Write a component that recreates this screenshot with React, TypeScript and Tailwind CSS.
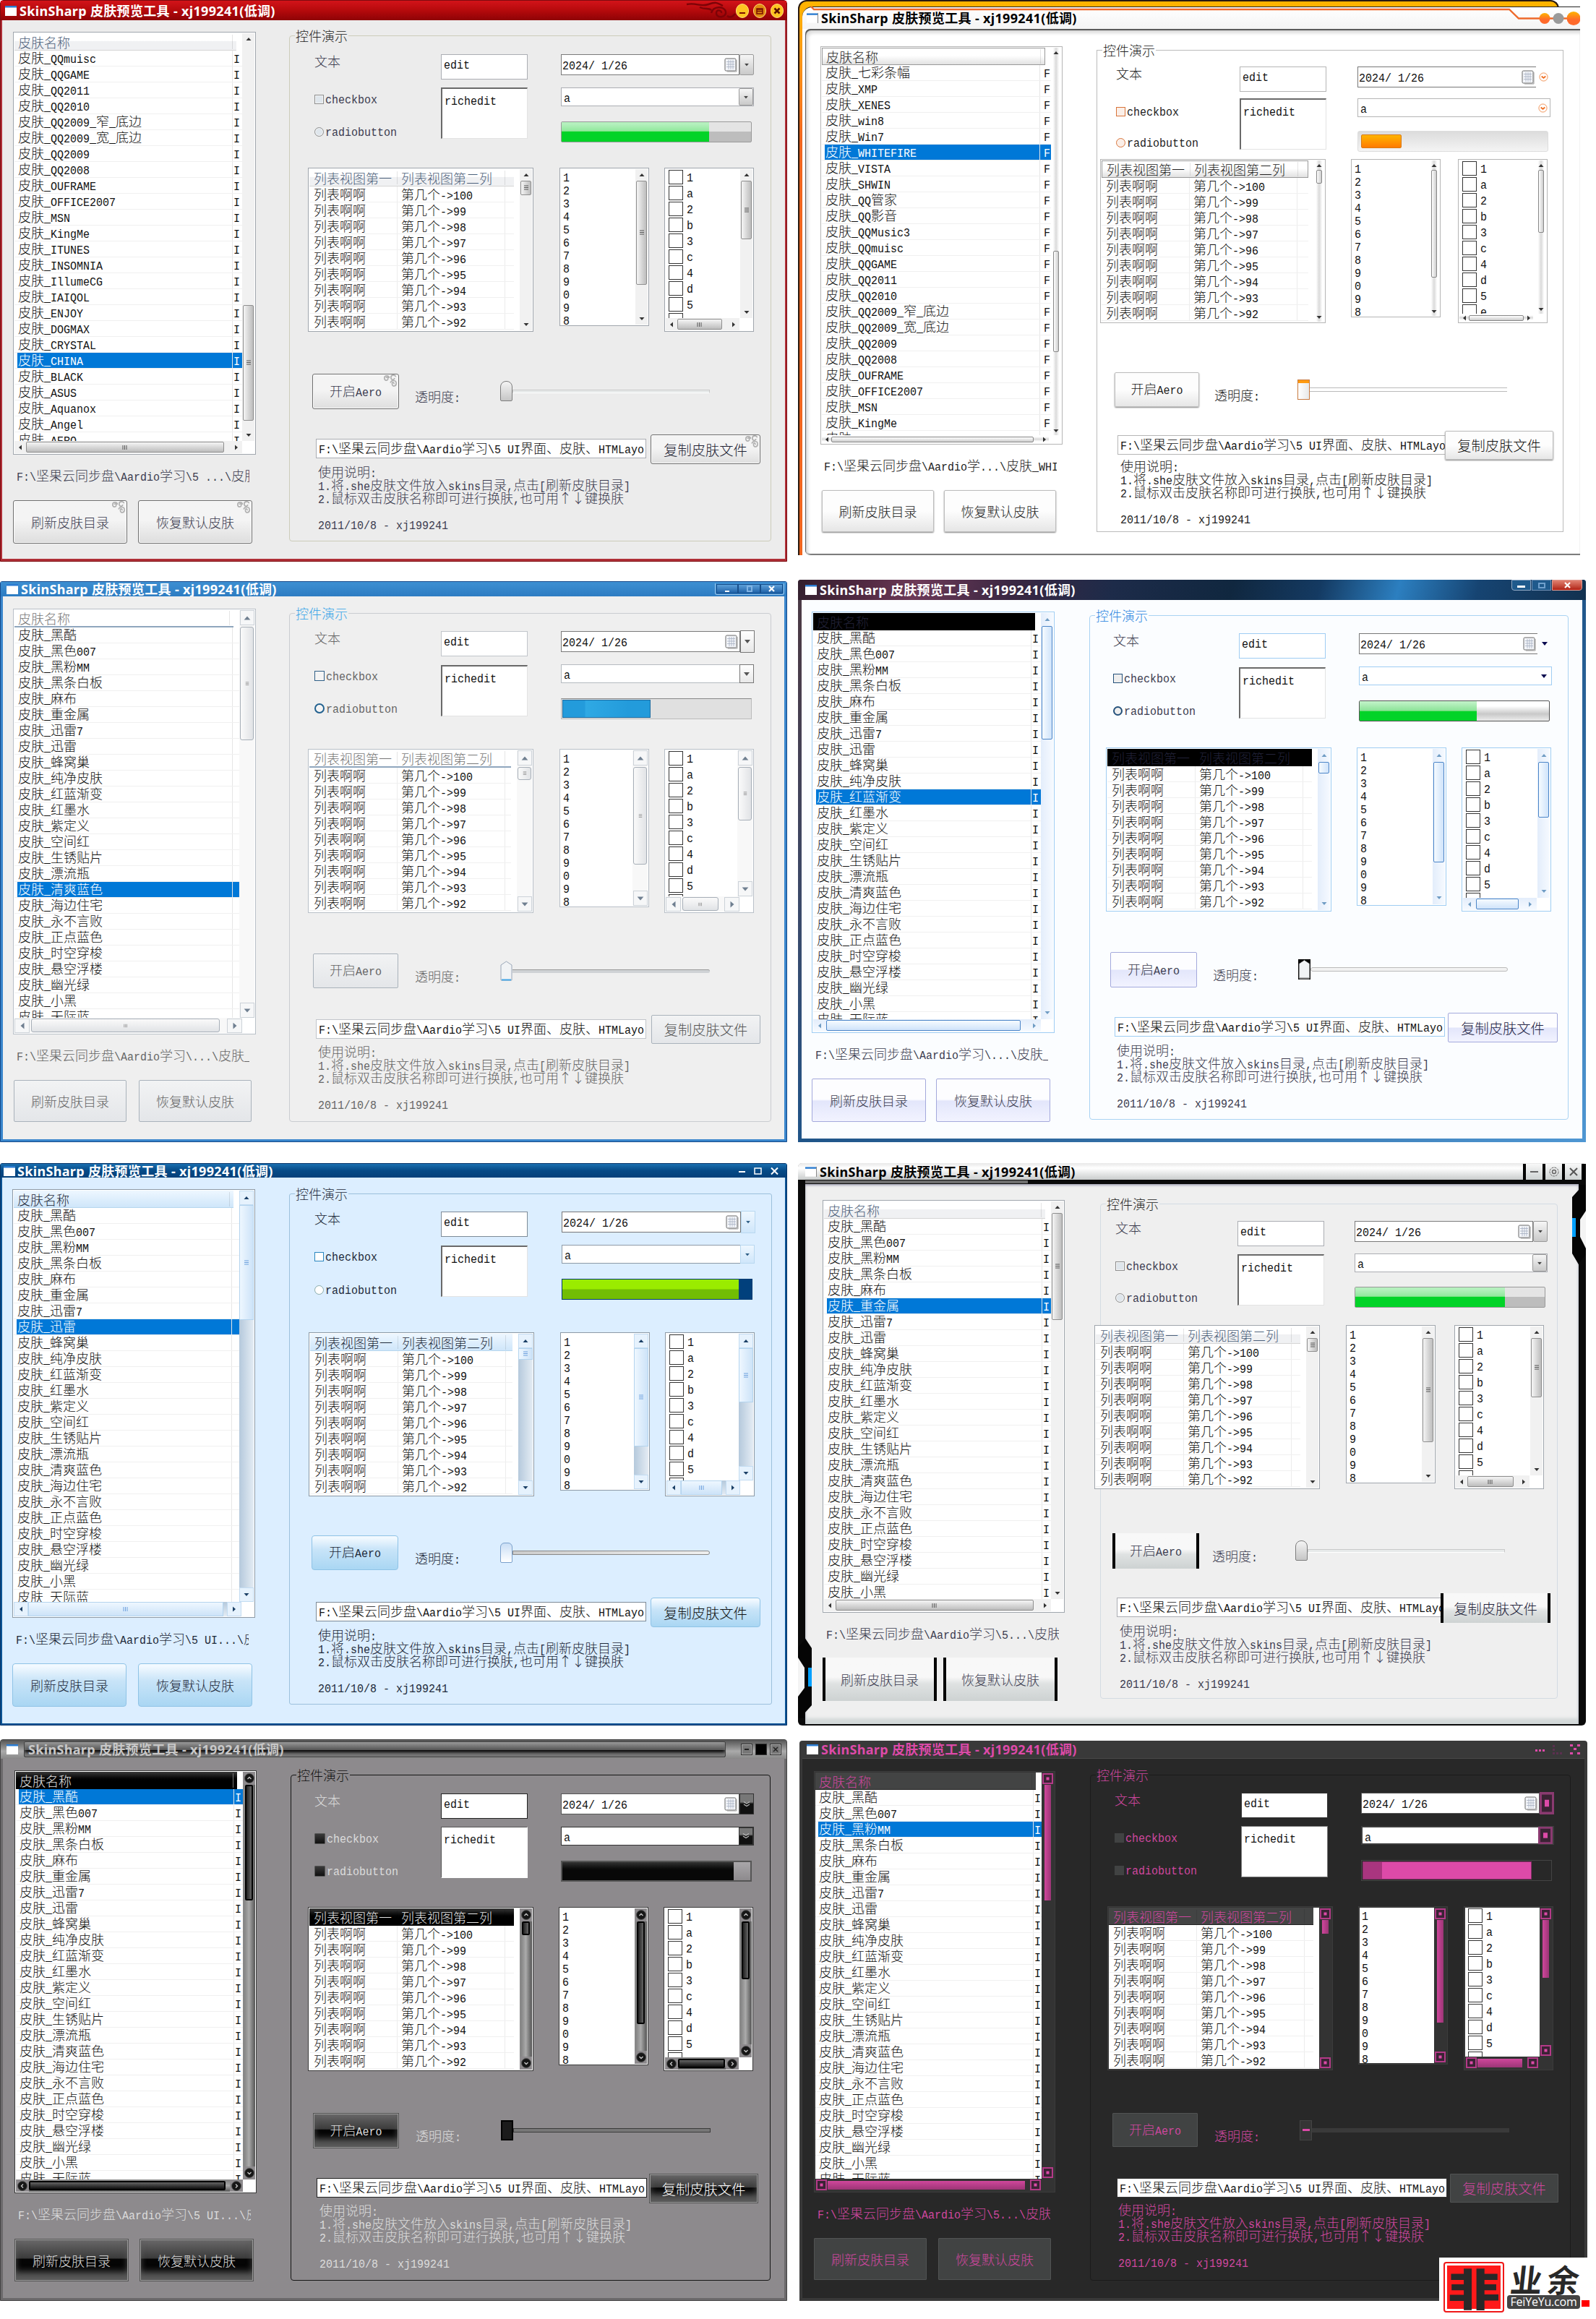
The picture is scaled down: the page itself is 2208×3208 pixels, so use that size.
import React from "react";

type Glyph = "tri" | "ball" | "square";
type Drop = "tri" | "circle" | "double" | "square";

interface Skin {
  id: string;
  text: string;
  headText: string;
  legend: string;
  copyText: string;
  names: string[];
  selected: number;
  flag: string;
  path: string;
  // left column
  leftCol: string;
  list: string;
  header: string;
  lineBox: string;
  leftBtns: string;
  leftBtn: string;
  // group box
  group: string;
  rowA: string;
  labels: string;
  radioGap: string;
  dateCol: string;
  gapA: string;
  comboGap: string;
  progressGap: string;
  rowB: string;
  listTwo: string;
  listThree: string;
  aeroRow: string;
  aeroBtn: string;
  opacityLabel: string;
  slider: string;
  pathRow: string;
  copyBtn: string;
  notes: string;
  // control looks
  btn: string;
  edit: string;
  rich: string;
  date: string;
  combo: string;
  dropBtn: string;
  drop: Drop;
  dropColor: string;
  check: string;
  radio: string;
  progress: string;
  fill: string;
  fillPct: number;
  thumb: string;
  track: string;
  // scroll bars
  sbW: string;
  sbH: string;
  sbArrowV: string;
  sbArrowH: string;
  sbTrackV: string;
  sbTrackH: string;
  sbThumbV: string;
  sbThumbH: string;
  sbGlyph: Glyph;
  sbColor: string;
  grip: string;
  main: [number, number];
  mainH: number;
  lens: [number, number, number, number];
}

const dark = [
  "黑酷", "黑色007", "黑粉MM", "黑条白板", "麻布", "重金属", "迅雷7", "迅雷", "蜂窝巢",
  "纯净皮肤", "红蓝渐变", "红墨水", "紫定义", "空间红", "生锈贴片", "漂流瓶", "清爽蓝色",
  "海边住宅", "永不言败", "正点蓝色", "时空穿梭", "悬空浮楼", "幽光绿", "小黑", "天际蓝",
];
const china = [
  "QQmuisc", "QQGAME", "QQ2011", "QQ2010", "QQ2009_窄_底边", "QQ2009_宽_底边", "QQ2009",
  "QQ2008", "OUFRAME", "OFFICE2007", "MSN", "KingMe", "ITUNES", "INSOMNIA", "IllumeCG",
  "IAIQOL", "ENJOY", "DOGMAX", "CRYSTAL", "CHINA", "BLACK", "ASUS", "Aquanox", "Angel", "AERO",
];
const white = [
  "七彩条幅", "XMP", "XENES", "win8", "Win7", "WHITEFIRE", "VISTA", "SHWIN", "QQ管家",
  "QQ影音", "QQMusic3", "QQmuisc", "QQGAME", "QQ2011", "QQ2010", "QQ2009_窄_底边",
  "QQ2009_宽_底边", "QQ2009", "QQ2008", "OUFRAME", "OFFICE2007", "MSN", "KingMe", "ITUNES",
];

/** Bitmap-style mixed text: full-width hanzi with half-width latin cells. */
function T({ children, className = "" }: { children: string; className?: string }) {
  const parts = children.split(/([\x20-\x7e]+)/).filter(Boolean);
  return (
    <span className={"whitespace-pre " + className}>
      {parts.map((p, i) =>
        /^[\x20-\x7e]+$/.test(p) ? (
          <span
            key={i}
            className="inline-block origin-[50%_70%] scale-y-[1.15] font-['Liberation_Mono',monospace] text-[15px] leading-[16px]"
          >
            {p}
          </span>
        ) : (
          <React.Fragment key={i}>{p}</React.Fragment>
        ),
      )}
    </span>
  );
}

const rot = { up: "", down: "rotate-180", left: "-rotate-90", right: "rotate-90" } as const;
type Dir = keyof typeof rot;

function Arrow({ dir, skin }: { dir: Dir; skin: Skin }) {
  if (skin.sbGlyph === "ball")
    return (
      <svg viewBox="0 0 14 14" className={"size-[14px] shrink-0 " + rot[dir]}>
        <circle cx="7" cy="7" r="6.5" fill="#161616" stroke="#555" />
        <path d="M4.5 8 7 5.5 9.5 8" fill="none" stroke="#ccc" strokeWidth="1.3" />
      </svg>
    );
  if (skin.sbGlyph === "square")
    return (
      <svg viewBox="0 0 15 15" className="size-[15px] shrink-0">
        <rect x="1" y="1" width="13" height="13" fill="#3a2334" stroke="#b43a88" strokeWidth="2" />
        <rect x="5.5" y="5.5" width="4" height="4" fill="#dd4aa8" />
      </svg>
    );
  return (
    <svg viewBox="0 0 8 8" className={"size-[8px] shrink-0 " + rot[dir] + " " + skin.sbColor}>
      <path d="M0.5 6 4 2 7.5 6Z" fill="currentColor" />
    </svg>
  );
}

function Grip({ vertical, color }: { vertical: boolean; color: string }) {
  return vertical ? (
    <svg viewBox="0 0 8 8" className={"size-[8px] " + color}>
      <path d="M1 1h6M1 3.5h6M1 6h6" stroke="currentColor" strokeWidth="1" />
    </svg>
  ) : (
    <svg viewBox="0 0 8 8" className={"size-[8px] " + color}>
      <path d="M1 1v6M3.5 1v6M6 1v6" stroke="currentColor" strokeWidth="1" />
    </svg>
  );
}

function VBar({ skin, off = 0, len }: { skin: Skin; off?: number; len: number }) {
  return (
    <div className={"flex shrink-0 flex-col items-center " + skin.sbW + " " + skin.sbTrackV}>
      <div className={"flex shrink-0 items-center justify-center " + skin.sbArrowV}>
        <Arrow dir="up" skin={skin} />
      </div>
      <div className="flex min-h-0 w-full flex-1 flex-col items-center overflow-hidden">
        <div
          className={"flex shrink-0 items-center justify-center " + skin.sbThumbV}
          style={{ marginTop: off, height: len }}
        >
          {skin.grip && <Grip vertical color={skin.grip} />}
        </div>
      </div>
      <div className={"flex shrink-0 items-center justify-center " + skin.sbArrowV}>
        <Arrow dir="down" skin={skin} />
      </div>
    </div>
  );
}

function HBar({ skin, len, pad }: { skin: Skin; len: number; pad: string }) {
  return (
    <div className={"flex shrink-0 items-stretch " + skin.sbH + " " + pad}>
      <div className={"flex flex-1 items-center " + skin.sbTrackH}>
        <div className={"flex shrink-0 items-center justify-center " + skin.sbArrowH}>
          <Arrow dir="left" skin={skin} />
        </div>
        <div className="flex h-full min-w-0 flex-1 items-center overflow-hidden">
          <div className={"flex shrink-0 items-center justify-center " + skin.sbThumbH} style={{ width: len }}>
            {skin.grip && <Grip vertical={false} color={skin.grip} />}
          </div>
        </div>
        <div className={"flex shrink-0 items-center justify-center " + skin.sbArrowH}>
          <Arrow dir="right" skin={skin} />
        </div>
      </div>
    </div>
  );
}

function DropGlyph({ skin }: { skin: Skin }) {
  if (skin.drop === "circle")
    return (
      <svg viewBox="0 0 14 14" className="size-[13px]">
        <circle cx="7" cy="7" r="6" fill="#fff" stroke="#f08a4a" />
        <path d="M4 6 7 8.5 10 6" fill="none" stroke="#f06a1a" strokeWidth="2" />
      </svg>
    );
  if (skin.drop === "double")
    return (
      <svg viewBox="0 0 10 10" className="size-[10px]">
        <path d="M1 1.5 5 4 9 1.5M1 5 5 7.5 9 5" fill="none" stroke="#bbb" strokeWidth="1.2" />
      </svg>
    );
  if (skin.drop === "square")
    return (
      <svg viewBox="0 0 20 26" preserveAspectRatio="none" className="h-full w-full">
        <rect x="1.5" y="1.5" width="17" height="23" fill="#3a2334" stroke="#8a3a70" strokeWidth="3" />
        <rect x="7" y="9" width="6" height="8" fill="#dd4aa8" />
      </svg>
    );
  return (
    <svg viewBox="0 0 8 5" className={"h-[5px] w-[8px] " + skin.dropColor}>
      <path d="M0 0h8L4 5Z" fill="currentColor" />
    </svg>
  );
}

function Calendar() {
  return (
    <svg viewBox="0 0 18 20" className="mr-[2px] h-[20px] w-[18px] shrink-0">
      <rect x="1" y="1" width="15" height="17" rx="1.5" fill="#f4f6fa" stroke="#666" />
      <path d="M3 5.5h11M3 9h11M3 12.5h11M6 3v13M9 3v13M12 3v13" stroke="#a4aec0" strokeWidth="0.8" />
      <path d="M17 3v16H4" fill="none" stroke="#999" />
    </svg>
  );
}

function Swirl() {
  return (
    <svg viewBox="0 0 24 22" className="absolute right-0 top-0 h-[18px] w-[22px]">
      <path
        d="M10 6c0-5-8-5-8 0s6 5 6 1-3-2-3-1M21 4c0-4-8-4-8 1s6 5 6 1M12 14c2-5 10-5 10 1s-7 6-7 1 4-2 3 0"
        fill="none"
        stroke="#b0b0b0"
        strokeWidth="2"
      />
    </svg>
  );
}

function Btn({ skin, className, children }: { skin: Skin; className: string; children: React.ReactNode }) {
  return (
    <button className={"relative z-10 flex shrink-0 items-center justify-center " + skin.btn + " " + className}>
      {skin.id === "china" && <Swirl />}
      {children}
    </button>
  );
}

function SkinList({ skin }: { skin: Skin }) {
  return (
    <div className={"flex flex-col border p-[1px] " + skin.lineBox + " " + skin.list}>
      <div className="flex min-h-0 flex-1">
        <div className="min-w-0 flex-1 overflow-hidden bg-white">
          <div className={"mr-[8px] flex h-[24px] items-center pl-[5px] " + skin.header + " " + skin.headText}>
            <T>皮肤名称</T>
            <i className={"ml-auto mr-[5px] h-[20px] border-l " + (skin.id === "black" ? "border-[#777]" : "border-black/10")} />
          </div>
          {skin.names.map((n, i) => (
            <div
              key={n}
              className={
                "flex h-[22px] items-center border-b border-[#f0f0f0] pl-[4px] " +
                (i === skin.selected ? "text-white" : "text-[#111]")
              }
            >
              <div className={"flex h-[21px] w-full items-center " + (i === skin.selected ? "bg-[#0078d7]" : "")}>
                <T className="w-[297px] shrink-0 pl-[1px]">{"皮肤_" + n}</T>
                <div className="flex h-[21px] items-center border-l border-[#e6e6e6] pl-[1px]">
                  {skin.flag === "F" && <T className="pl-[4px]">F</T>}
                  {skin.flag === "I" && <T>I</T>}
                </div>
              </div>
            </div>
          ))}
        </div>
        <VBar skin={skin} off={skin.main[0]} len={skin.main[1]} />
      </div>
      <HBar skin={skin} len={skin.mainH} pad="mr-[17px]" />
    </div>
  );
}

function Demo({ skin }: { skin: Skin }) {
  return (
    <fieldset className={"min-w-0 shrink-0 border " + skin.group}>
      <legend className={"ml-[7px] h-[18px] px-[1px] " + skin.legend}>
        <T>控件演示</T>
      </legend>

      <div className={"box-content flex h-[122px] " + skin.rowA}>
        <div className={"flex shrink-0 flex-col " + skin.labels}>
          <T className="block h-[53px]">文本</T>
          <label className="flex h-[18px] items-center">
            <i className={"mr-[2px] shrink-0 " + skin.check} />
            <T>checkbox</T>
          </label>
          <label className={"flex h-[18px] items-center " + skin.radioGap}>
            <i className={"mr-[2px] shrink-0 " + skin.radio} />
            <T>radiobutton</T>
          </label>
        </div>
        <div className={"flex w-[120px] shrink-0 flex-col text-[#111] " + skin.gapA}>
          <div className={"h-[35px] shrink-0 pl-[3px] pt-[2px] " + skin.edit}>
            <T>edit</T>
          </div>
          <div className={"h-[71px] shrink-0 pl-[3px] pt-[5px] " + skin.rich}>
            <T>richedit</T>
          </div>
        </div>
        <div className={"flex w-[267px] shrink-0 flex-col text-[#111] " + skin.dateCol}>
          <div className="flex h-[29px] shrink-0">
            <div className={"flex min-w-0 flex-1 items-center pl-[1px] " + skin.date}>
              <T className="flex-1">2024/ 1/26</T>
              <Calendar />
            </div>
            <div className={"flex w-[20px] shrink-0 items-center justify-center " + skin.dropBtn}>
              <DropGlyph skin={skin} />
            </div>
          </div>
          <div className={"flex h-[26px] shrink-0 " + skin.comboGap + " " + skin.combo}>
            <T className="flex-1 pl-[3px] pt-[2px]">a</T>
            <div className={"flex w-[20px] shrink-0 items-center justify-center " + skin.dropBtn}>
              <DropGlyph skin={skin} />
            </div>
          </div>
          <div className={"flex h-[29px] w-[264px] shrink-0 " + skin.progressGap + " " + skin.progress}>
            <div className={"h-full " + skin.fill} style={{ width: skin.fillPct + "%" }} />
          </div>
        </div>
      </div>

      <div className={"flex h-[227px] items-start " + skin.rowB}>
        <div className={"relative flex h-[227px] w-[312px] shrink-0 border p-[1px] " + skin.lineBox}>
          <div className="min-w-0 flex-1 overflow-hidden bg-white">
            <div className={"mr-[8px] flex h-[24px] items-center " + skin.header + " " + skin.headText}>
              <T className="w-[121px] pl-[6px]">列表视图第一</T>
              <T className="w-[149px] border-l border-black/10 pl-[5px]">列表视图第二列</T>
              <i className="h-[20px] border-l border-black/10" />
            </div>
            {[100, 99, 98, 97, 96, 95, 94, 93, 92].map((n) => (
              <div key={n} className="mr-[8px] flex h-[22px] items-center border-b border-[#f0f0f0] text-[#111]">
                <T className="h-[21px] w-[121px] pl-[6px] leading-[20px]">列表啊啊</T>
                <T className="h-[21px] w-[149px] border-l border-[#ececec] pl-[5px] leading-[20px]">{"第几个->" + n}</T>
                <i className="h-[21px] border-l border-[#ececec]" />
              </div>
            ))}
          </div>
          <VBar skin={skin} len={skin.lens[0]} />
        </div>
        <div className={"flex h-[219px] w-[124px] shrink-0 border p-[1px] " + skin.lineBox + " " + skin.listTwo}>
          <div className="flex-1 bg-white pl-[3px] text-[#111]">
            {"123456789098".split("").map((n, i) => (
              <div key={i} className="h-[18px]">
                <T>{n}</T>
              </div>
            ))}
          </div>
          <VBar skin={skin} len={skin.lens[1]} />
        </div>
        <div className={"flex h-[227px] w-[124px] shrink-0 flex-col border p-[1px] " + skin.lineBox + " " + skin.listThree}>
          <div className="flex min-h-0 flex-1">
            <div className="flex-1 overflow-hidden bg-white pl-[4px] text-[#111]">
              {["1", "a", "2", "b", "3", "c", "4", "d", "5", skin.flag === "F" ? "e" : " "].map((n) => (
                <div key={n} className="flex h-[22px] items-center">
                  <i className="mr-[5px] size-[20px] border border-[#333] bg-white" />
                  <T>{n}</T>
                </div>
              ))}
            </div>
            <VBar skin={skin} len={skin.lens[2]} />
          </div>
          <HBar skin={skin} len={skin.lens[3]} pad="mr-[18px]" />
        </div>
      </div>

      <div className={"flex items-start " + skin.aeroRow}>
        <Btn skin={skin} className={skin.aeroBtn}>
          <T>开启Aero</T>
        </Btn>
        <T className={"mt-[22px] w-[63px] shrink-0 " + skin.opacityLabel}>透明度:</T>
        <div className={"mt-[10px] flex h-[28px] items-center " + skin.slider}>
          <div className={"h-[28px] w-[17px] shrink-0 " + skin.thumb}>
            {skin.id === "blue" && <ThumbPoint stroke="#9aa7b8" foot="#42a5e6" />}
            {skin.id === "redblue" && <ThumbPoint stroke="#222" foot="#777" />}
            {skin.id === "pink" && <i className="mx-auto mt-[11px] block h-[3px] w-[10px] bg-[#dd4aa8]" />}
            {skin.id === "white" && <i className="block h-[4px] w-full bg-[#ff9a10]" />}
          </div>
          <div className={"w-[273px] " + skin.track} />
        </div>
      </div>

      <div className={"flex items-start " + skin.pathRow}>
        <div className={"mt-[6px] h-[27px] w-[457px] shrink-0 overflow-hidden bg-white pl-[3px] pt-[2px] text-[#111] " + skin.edit}>
          <T>F:\坚果云同步盘\Aardio学习\5 UI界面、皮肤、HTMLayo</T>
        </div>
        <Btn skin={skin} className={skin.copyBtn}>
          <span className={"text-[19.300px] " + skin.copyText}>复制皮肤文件</span>
        </Btn>
      </div>

      <div className={"flex flex-col " + skin.notes}>
        <T className="h-[18px]">使用说明:</T>
        <T className="h-[18px]">1.将.she皮肤文件放入skins目录,点击[刷新皮肤目录]</T>
        <T className="h-[18px]">2.鼠标双击皮肤名称即可进行换肤,也可用↑↓键换肤</T>
        <T className="mt-[18px] h-[18px]">2011/10/8 - xj199241</T>
      </div>
    </fieldset>
  );
}

function ThumbPoint({ stroke, foot }: { stroke: string; foot: string }) {
  return (
    <svg viewBox="0 0 17 28" className="h-[28px] w-[17px]">
      <path d="M1 27V6L8.5 1 16 6V27Z" fill="#f1f3f5" stroke={stroke} />
      <path d="M2 26.5h13" stroke={foot} strokeWidth="2" />
    </svg>
  );
}

function Body({ skin }: { skin: Skin }) {
  return (
    <div className={"flex min-h-0 flex-1 items-start " + skin.text}>
      <div className={"flex shrink-0 flex-col " + skin.leftCol}>
        <SkinList skin={skin} />
        <div className="mb-[23px] mt-[19px] h-[21px] w-[327px] overflow-hidden pl-[5px]">
          <T>{skin.path}</T>
        </div>
        <div className={"flex " + skin.leftBtns}>
          <Btn skin={skin} className={skin.leftBtn}>
            <T>刷新皮肤目录</T>
          </Btn>
          <Btn skin={skin} className={skin.leftBtn}>
            <T>恢复默认皮肤</T>
          </Btn>
        </div>
      </div>
      <Demo skin={skin} />
    </div>
  );
}

function AppIcon({ className = "" }: { className?: string }) {
  return (
    <svg viewBox="0 0 16 14" className={"h-[14px] w-[16px] shrink-0 " + className}>
      <rect width="16" height="14" fill="#fff" />
      <rect width="16" height="2.5" fill="#2a7bd0" />
    </svg>
  );
}

function Title({ className }: { className: string }) {
  return (
    <span className={"whitespace-pre font-['Noto_Sans','Noto_Sans_CJK_SC',sans-serif] text-[18px] font-bold leading-[20px] tracking-[0.33px] " + className}>
      SkinSharp 皮肤预览工具 - xj199241(低调)
    </span>
  );
}

/* ---- themes ---- */

const graySb = {
  sbW: "w-[17px]",
  sbH: "h-[17px]",
  sbArrowV: "h-[16px] w-full",
  sbArrowH: "h-full w-[16px]",
  sbTrackV: "bg-[#f1f1f1]",
  sbTrackH: "bg-[#f1f1f1]",
  sbThumbV: "w-[15px] rounded-[2px] border border-[#8f8f8f] bg-linear-to-r from-[#f5f5f5] to-[#bdbdbd]",
  sbThumbH: "h-[15px] rounded-[2px] border border-[#8f8f8f] bg-linear-to-b from-[#f5f5f5] to-[#bdbdbd]",
  sbGlyph: "tri" as Glyph,
  sbColor: "text-[#333]",
  grip: "text-[#555]",
};

const grayLook = {
  radioGap: "mt-[27px]",
  comboGap: "mt-[17px]",
  progressGap: "mt-[21px]",
  header: "bg-linear-to-b from-white from-45% to-[#f0f1f3] to-50% border-b border-[#d5d5d5]",
  headText: "text-[#4c607a]",
  lineBox: "border-[#a0a6ad] bg-white",
  edit: "border border-[#abadb3] bg-white",
  rich: "border-l-2 border-t-2 border-[#696969] border-b border-r border-b-[#e3e3e3] border-r-[#e3e3e3] bg-white",
  date: "border border-[#7a7a7a] bg-white",
  combo: "border border-[#abadb3] bg-white",
  dropBtn: "border border-[#9a9a9a] rounded-[2px] bg-linear-to-b from-[#f6f6f6] to-[#c9c9c9]",
  drop: "tri" as Drop,
  dropColor: "text-[#444] scale-75",
  check: "size-[13px] border border-[#8e8f8f] bg-[#dfe6ec] shadow-[inset_0_0_0_1px_#f4f4f4]",
  radio: "size-[13px] rounded-full border border-[#8e8f8f] bg-[#dfe6ec] shadow-[inset_0_0_0_1px_#f4f4f4]",
  progress: "rounded-[2px] border border-[#999] bg-linear-to-b from-[#e4e4e4] from-50% to-[#bdbdbd] to-50%",
  fill: "bg-linear-to-b from-[#b4f0bd] from-10% via-[#90e89c] via-45% to-[#02d328] to-50%",
  thumb: "rounded-t-[8px] rounded-b-[2px] border border-[#7d7d7d] bg-linear-to-b from-[#f4f4f4] to-[#c6c6c6]",
  track: "h-[5px] border border-[#c9c9c9] border-b-white bg-[#e7eaea]",
  ...graySb,
};

const skins: Skin[] = [
  {
    ...grayLook,
    id: "china",
    text: "text-[#3c3c50]",
    legend: "text-[#222]",
    copyText: "text-[#222233]",
    names: china,
    selected: 19,
    flag: "I",
    path: "F:\\坚果云同步盘\\Aardio学习\\5 ...\\皮肤",
    leftCol: "ml-[15px] mt-[16px]",
    list: "h-[585px] w-[336px]",
    leftBtns: "gap-[15px]",
    leftBtn: "h-[60px] w-[158px]",
    group: "ml-[46px] mt-[12px] h-[709px] w-[667px] rounded-[4px] border-[#ccccba]",
    rowA: "pt-[17px]",
    labels: "ml-[34px] w-[175px]",
    dateCol: "ml-[46px]",
    gapA: "gap-[11px]",
    rowB: "mt-[35px] ml-[25px]",
    listTwo: "ml-[36px]",
    listThree: "ml-[21px]",
    aeroRow: "mt-[58px] ml-[31px] h-[49px]",
    aeroBtn: "h-[49px] w-[120px]",
    opacityLabel: "ml-[22px]",
    slider: "ml-[55px]",
    pathRow: "mt-[35px] ml-[36px] h-[41px]",
    copyBtn: "ml-[6px] h-[41px] w-[152px]",
    notes: "mt-[1px] ml-[39px]",
    btn: "rounded-[3px] border border-[#707070] bg-linear-to-b from-[#f4f4f4] from-45% to-[#dedede] shadow-[inset_0_0_0_1px_#fafafa]",
    fillPct: 78,
    main: [360, 160],
    mainH: 274,
    lens: [20, 144, 81, 62],
  },
  {
    ...grayLook,
    id: "white",
    text: "text-[#222]",
    headText: "text-[#222]",
    legend: "text-[#222]",
    copyText: "text-[#111]",
    names: white,
    selected: 5,
    flag: "F",
    path: "F:\\坚果云同步盘\\Aardio学...\\皮肤_WHI",
    leftCol: "ml-[21px] mt-[24px]",
    list: "h-[551px] w-[335px]",
    header: "border border-[#999] bg-linear-to-b from-white from-45% to-[#e2e2e2]",
    lineBox: "border-[#b5b5b5] bg-white",
    leftBtns: "gap-[14px] ml-[2px]",
    leftBtn: "h-[58px] w-[155px]",
    group: "ml-[47px] mt-[20px] h-[676px] w-[646px] border-[#bbb]",
    rowA: "pt-[14px]",
    labels: "ml-[26px] w-[171px]",
    radioGap: "mt-[25px]",
    dateCol: "ml-[43px]",
    gapA: "gap-[9px]",
    comboGap: "mt-[15px]",
    progressGap: "mt-[19px]",
    rowB: "mt-[6px] ml-[4px]",
    listTwo: "ml-[35px]",
    listThree: "ml-[24px]",
    aeroRow: "mt-[68px] ml-[24px] h-[48px]",
    aeroBtn: "h-[48px] w-[117px]",
    opacityLabel: "ml-[21px]",
    slider: "ml-[52px]",
    pathRow: "mt-[33px] ml-[28px] h-[40px]",
    copyBtn: "-ml-[4px] h-[40px] w-[150px]",
    notes: "-mt-[1px] ml-[32px]",
    btn: "rounded-[2px] border border-[#bdbdbd] bg-linear-to-b from-[#fdfdfd] from-50% to-[#e6e6e6] shadow-[0_1px_2px_#888]",
    edit: "border border-[#b5b5b5] bg-white",
    date: "border-y border-l border-[#777] bg-white",
    combo: "border border-[#b5b5b5] bg-white",
    dropBtn: "",
    drop: "circle",
    check: "size-[13px] border border-[#d9743a] bg-[#fbefe8]",
    radio: "size-[13px] rounded-full border border-[#d9743a] bg-[#fbefe8]",
    progress: "rounded-[3px] border border-[#ddd] bg-linear-to-b from-[#dcdcdc] to-[#f4f4f4] p-[4px]",
    fill: "rounded-[2px] border border-[#d97a10] bg-linear-to-b from-[#ffb400] to-[#ff7a00]",
    fillPct: 22,
    thumb: "border border-[#c87a40] bg-linear-to-r from-white to-[#e8e8e8]",
    track: "h-[6px] border-y border-[#bbb]",
    sbW: "w-[14px]",
    sbH: "h-[11px]",
    sbArrowV: "h-[13px] w-full",
    sbArrowH: "h-full w-[13px]",
    sbTrackV: "bg-linear-to-r from-white from-20% via-[#dadada] to-white to-80%",
    sbTrackH: "bg-linear-to-b from-white from-20% via-[#dadada] to-white to-80%",
    sbThumbV: "w-[8px] rounded-[2px] border border-[#888] bg-linear-to-r from-white to-[#ccc]",
    sbThumbH: "h-[8px] rounded-[2px] border border-[#888] bg-linear-to-b from-white to-[#ccc]",
    grip: "",
    main: [268, 140],
    mainH: 280,
    lens: [19, 149, 87, 76],
  },
  {
    ...grayLook,
    id: "blue",
    text: "text-[#666]",
    headText: "text-[#777]",
    legend: "text-[#35a4e8]",
    copyText: "text-[#555]",
    names: dark,
    selected: 16,
    flag: "",
    path: "F:\\坚果云同步盘\\Aardio学习\\...\\皮肤_",
    leftCol: "ml-[14px] mt-[17px]",
    list: "h-[589px] w-[336px]",
    header: "border-b-2 border-[#8fa6bd] bg-white",
    lineBox: "border-[#b9c0c8] bg-white",
    leftBtns: "gap-[17px] ml-[1px]",
    leftBtn: "h-[58px] w-[156px]",
    group: "ml-[46px] mt-[14px] h-[713px] w-[667px] rounded-[4px] border-[#c9ccd0]",
    rowA: "pt-[16px]",
    labels: "ml-[34px] w-[175px]",
    dateCol: "ml-[46px]",
    gapA: "gap-[12px]",
    rowB: "mt-[41px] ml-[25px]",
    listTwo: "ml-[36px]",
    listThree: "ml-[21px]",
    aeroRow: "mt-[56px] ml-[32px] h-[48px]",
    aeroBtn: "h-[48px] w-[118px]",
    opacityLabel: "ml-[23px]",
    slider: "ml-[55px]",
    pathRow: "mt-[37px] ml-[36px] h-[40px]",
    copyBtn: "ml-[7px] h-[40px] w-[151px]",
    notes: "mt-[1px] ml-[39px]",
    btn: "rounded-[2px] border border-[#a9b2bb] bg-linear-to-b from-[#f2f3f4] to-[#e4e6e9]",
    edit: "border border-[#c1c5ca] bg-white",
    date: "border border-[#7a7a7a] bg-white",
    combo: "border border-[#b5bac0] bg-white",
    dropBtn: "border border-[#777] bg-linear-to-b from-white to-[#e8e8e8] -my-px -mr-px",
    dropColor: "text-[#555]",
    check: "size-[14px] border border-[#2f5f86] bg-[#f4f4f4]",
    radio: "size-[14px] rounded-full border-2 border-[#22618f] bg-[#f4f4f4]",
    progress: "border border-[#bbb] border-t-[#888] bg-[#e0e0e0] p-[1px]",
    fill: "border border-[#1c6da3] bg-linear-to-r from-[#239bdb] from-25% via-[#2fa9e4] via-26% to-[#239bdb] to-75%",
    fillPct: 47,
    thumb: "",
    track: "h-[5px] rounded-r border-t border-[#999] bg-[#cfd2d5]",
    sbW: "w-[21px]",
    sbH: "h-[21px]",
    sbArrowV: "h-[21px] w-[20px] border border-[#ccd2d8] bg-[#f6f7f8] mb-[2px] last:mb-0",
    sbArrowH: "h-[20px] w-[21px] border border-[#ccd2d8] bg-[#f6f7f8] mr-[2px] last:mr-0",
    sbTrackV: "bg-[#f8f8f8]",
    sbTrackH: "bg-[#f8f8f8]",
    sbThumbV: "w-[19px] rounded-[3px] border border-[#a7afb8] bg-linear-to-r from-[#fafafa] to-[#e1e3e6]",
    sbThumbH: "h-[19px] rounded-[3px] border border-[#a7afb8] bg-linear-to-b from-[#fafafa] to-[#e1e3e6]",
    sbColor: "text-[#6f7f90] scale-125",
    grip: "text-[#888] scale-75",
    main: [0, 157],
    mainH: 261,
    lens: [18, 135, 74, 50],
  },
  {
    ...grayLook,
    id: "redblue",
    text: "text-[#3c3c50]",
    headText: "text-[#23233a]",
    legend: "text-[#2a86e0]",
    copyText: "text-[#222244]",
    names: dark,
    selected: 10,
    flag: "I",
    path: "F:\\坚果云同步盘\\Aardio学习\\...\\皮肤_",
    leftCol: "ml-[14px] mt-[16px]",
    list: "h-[583px] w-[336px]",
    header: "bg-black",
    lineBox: "border-[#9fcdf3] bg-white",
    leftBtns: "gap-[14px]",
    leftBtn: "h-[60px] w-[158px]",
    group: "ml-[48px] mt-[12px] h-[707px] w-[663px] rounded-[4px] border-[#a9d3f3]",
    rowA: "pt-[16px]",
    labels: "ml-[32px] w-[174px]",
    dateCol: "ml-[46px]",
    gapA: "gap-[12px]",
    rowB: "mt-[36px] ml-[22px]",
    listTwo: "ml-[35px]",
    listThree: "ml-[21px]",
    aeroRow: "mt-[56px] ml-[28px] h-[49px]",
    aeroBtn: "h-[49px] w-[120px]",
    opacityLabel: "ml-[22px]",
    slider: "ml-[55px]",
    pathRow: "mt-[35px] ml-[34px] h-[41px]",
    copyBtn: "ml-[4px] h-[41px] w-[152px]",
    notes: "mt-[1px] ml-[37px]",
    btn: "rounded-[2px] border border-[#a4a9dc] bg-linear-to-b from-[#fdfdff] from-48% via-[#e3e6fb] via-52% to-[#f2f3ff]",
    edit: "border border-[#9fcdf3] bg-white",
    date: "border-y border-l border-[#777] bg-white",
    combo: "border border-[#9fcdf3] bg-white",
    dropBtn: "",
    dropColor: "text-[#0b0b50]",
    check: "size-[13px] border border-[#23507a] bg-[#eee]",
    radio: "size-[13px] rounded-full border-2 border-[#23507a] bg-[#eee]",
    progress: "rounded-[2px] border border-[#555] bg-linear-to-b from-white from-25% via-[#c9c9c9] via-65% to-[#ececec]",
    fill: "bg-linear-to-b from-[#c4f4cb] via-[#8be398] via-48% to-[#02d328] to-52%",
    fillPct: 62,
    thumb: "bg-black",
    track: "h-[6px] rounded border border-[#bbb] bg-[#f2f2f2]",
    sbW: "w-[17px]",
    sbH: "h-[17px]",
    sbArrowV: "h-[18px] w-full",
    sbArrowH: "h-full w-[18px]",
    sbTrackV: "bg-linear-to-r from-[#e3edfb] to-[#f6faff]",
    sbTrackH: "bg-linear-to-b from-[#e3edfb] to-[#f6faff]",
    sbThumbV: "w-[15px] rounded-[2px] border border-[#4d86c8] bg-linear-to-r from-[#f6fbff] to-[#cfe3fa]",
    sbThumbH: "h-[15px] rounded-[2px] border border-[#4d86c8] bg-linear-to-b from-[#f6fbff] to-[#cfe3fa]",
    sbColor: "text-[#6f9cc4]",
    grip: "",
    main: [0, 157],
    mainH: 269,
    lens: [16, 139, 77, 59],
  },
  {
    ...grayLook,
    id: "thunder",
    text: "text-[#1e2a3a]",
    headText: "text-[#1e2a3a]",
    legend: "text-[#1e2a3a]",
    copyText: "text-[#111]",
    names: dark,
    selected: 7,
    flag: "",
    path: "F:\\坚果云同步盘\\Aardio学习\\5 UI...\\皮",
    leftCol: "ml-[14px] mt-[16px]",
    list: "h-[593px] w-[336px]",
    header: "border-b border-[#b6d6ee] bg-linear-to-b from-[#eef7ff] to-[#cfe6fa]",
    lineBox: "border-[#8d9aa6] bg-white",
    leftBtns: "gap-[16px]",
    leftBtn: "h-[60px] w-[158px]",
    group: "ml-[47px] mt-[13px] h-[716px] w-[668px] rounded-[3px] border-[#9cc0dc]",
    rowA: "pt-[16px]",
    labels: "ml-[34px] w-[175px]",
    radioGap: "mt-[28px]",
    dateCol: "ml-[47px]",
    gapA: "gap-[12px]",
    rowB: "mt-[45px] ml-[26px]",
    listTwo: "ml-[36px]",
    listThree: "ml-[21px]",
    aeroRow: "mt-[54px] ml-[30px] h-[48px]",
    aeroBtn: "h-[48px] w-[120px]",
    opacityLabel: "ml-[23px]",
    slider: "ml-[55px]",
    pathRow: "mt-[38px] ml-[36px] h-[41px]",
    copyBtn: "ml-[6px] h-[41px] w-[152px]",
    notes: "mt-[1px] ml-[39px]",
    btn: "rounded-[4px] border border-[#8fc3e6] bg-linear-to-b from-[#f2f9ff] from-5% via-[#c8e4f8] via-40% to-[#a9d6f3]",
    edit: "border border-[#7d8b97] bg-white",
    date: "border border-[#777] bg-white",
    combo: "border border-[#8d9aa6] bg-white",
    dropBtn: "border border-[#b9d8f0] bg-linear-to-b from-[#eef7ff] to-[#cfe6fa] -my-px -mr-px",
    dropColor: "text-[#2f5f86] scale-75",
    check: "size-[13px] border border-[#2a86c0] bg-white",
    radio: "size-[13px] rounded-full border border-[#8aa] bg-white",
    progress: "border border-[#003a70] bg-[#01407c]",
    fill: "bg-linear-to-b from-[#9aec00] from-48% to-[#72bd04] to-52%",
    fillPct: 93,
    thumb: "rounded-t-[6px] rounded-b-[2px] border border-[#7aa0cc] bg-linear-to-b from-[#c9def5] to-white",
    track: "h-[6px] rounded-r-full border border-[#888] bg-linear-to-r from-[#ccc] to-[#eee]",
    sbW: "w-[20px]",
    sbH: "h-[20px]",
    sbArrowV: "h-[20px] w-full border border-[#c3dcf2] bg-[#e6f2fd]",
    sbArrowH: "h-full w-[20px] border border-[#c3dcf2] bg-[#e6f2fd]",
    sbTrackV: "bg-linear-to-r from-[#b5c9dc] to-[#e4ecf4]",
    sbTrackH: "bg-linear-to-b from-[#b5c9dc] to-[#e4ecf4]",
    sbThumbV: "w-full border border-[#b4d4ee] bg-linear-to-r from-[#eef7ff] to-[#cde3f8]",
    sbThumbH: "h-full border border-[#b4d4ee] bg-linear-to-b from-[#eef7ff] to-[#cde3f8]",
    sbColor: "text-[#1b3f66]",
    grip: "text-[#6da0dd]",
    main: [0, 159],
    mainH: 270,
    lens: [16, 136, 75, 57],
  },
  {
    ...grayLook,
    id: "metal",
    text: "text-[#3c3c50]",
    legend: "text-[#222]",
    copyText: "text-[#22223a]",
    names: dark.slice(0, 24),
    selected: 5,
    flag: "I",
    path: "F:\\坚果云同步盘\\Aardio学习\\5...\\皮肤",
    leftCol: "ml-[24px] mt-[22px]",
    list: "h-[571px] w-[335px]",
    leftBtns: "-mt-[1px] gap-[9px]",
    leftBtn: "h-[60px] w-[158px]",
    group: "ml-[49px] mt-[18px] h-[694px] w-[633px] rounded-[4px] border-[#d3dbe3]",
    rowA: "pt-[15px]",
    labels: "ml-[20px] w-[169px]",
    radioGap: "mt-[26px]",
    dateCol: "ml-[42px]",
    gapA: "gap-[11px]",
    comboGap: "mt-[16px]",
    progressGap: "mt-[20px]",
    rowB: "mt-[22px] -ml-[9px]",
    listTwo: "ml-[36px]",
    listThree: "ml-[26px]",
    aeroRow: "mt-[61px] ml-[16px] h-[49px]",
    aeroBtn: "h-[49px] w-[120px]",
    opacityLabel: "ml-[18px]",
    slider: "ml-[52px]",
    pathRow: "mt-[34px] ml-[22px] h-[41px]",
    copyBtn: "-ml-[9px] h-[41px] w-[152px]",
    notes: "mt-[1px] ml-[26px]",
    btn: "border-x-[4px] border-black bg-linear-to-b from-[#f8f8f8] from-45% via-[#dfe2e2] via-60% to-[#cdd2d2]",
    fillPct: 79,
    main: [0, 148],
    mainH: 274,
    lens: [19, 144, 82, 64],
  },
  {
    ...grayLook,
    id: "black",
    text: "text-[#dcdcdc]",
    headText: "text-[#e4e4e4]",
    legend: "text-[#111]",
    copyText: "text-white",
    names: dark,
    selected: 0,
    flag: "I",
    path: "F:\\坚果云同步盘\\Aardio学习\\5 UI...\\皮",
    leftCol: "ml-[16px] mt-[16px]",
    list: "h-[585px] w-[335px]",
    header: "bg-linear-to-b from-[#3a3a3a] to-black to-60%",
    lineBox: "border-[#3a3a3a] bg-white",
    leftBtns: "gap-[15px]",
    leftBtn: "h-[59px] w-[158px]",
    group: "ml-[47px] mt-[13px] h-[709px] w-[664px] rounded-[4px] border-[#161616]",
    rowA: "pt-[17px]",
    labels: "ml-[32px] w-[175px]",
    dateCol: "ml-[46px]",
    gapA: "gap-[11px]",
    rowB: "mt-[35px] ml-[23px]",
    listTwo: "ml-[35px]",
    listThree: "ml-[21px]",
    aeroRow: "mt-[58px] ml-[30px] h-[49px]",
    aeroBtn: "h-[49px] w-[119px]",
    opacityLabel: "ml-[23px]",
    slider: "ml-[55px]",
    pathRow: "mt-[35px] ml-[35px] h-[41px]",
    copyBtn: "ml-[3px] h-[41px] w-[151px]",
    notes: "mt-0 ml-[39px]",
    btn: "border border-[#555] bg-linear-to-b from-[#6a696a] from-0% via-[#3c3c3c] via-45% to-[#050505] to-48% shadow-[inset_0_0_0_1px_#999,inset_0_-12px_10px_#5a5a5a]",
    edit: "border border-[#222] bg-white",
    rich: "border border-[#555] border-b-white border-r-white bg-white",
    date: "border border-[#555] bg-white",
    combo: "border border-[#333] bg-white",
    dropBtn: "border border-[#333] bg-linear-to-b from-[#777] from-40% to-[#111] to-50%",
    drop: "double",
    check: "size-[15px] rounded-[1px] border border-[#555] bg-linear-to-b from-[#3a3a3a] to-[#111]",
    radio: "size-[15px] rounded-[1px] border border-[#555] bg-linear-to-b from-[#3a3a3a] to-[#111]",
    progress: "border-2 border-[#555] bg-linear-to-b from-[#a9a7aa] to-[#8d8a8d]",
    fill: "bg-linear-to-b from-[#333] to-[#080808] to-40%",
    fillPct: 91,
    thumb: "border-2 border-black bg-[#1b1b1b]",
    track: "h-[6px] border border-[#3b3b3b] bg-[#777]",
    sbW: "w-[17px]",
    sbH: "h-[17px] bg-[#8d8a8d]",
    sbArrowV: "h-[18px] w-full bg-[#8d8a8d]",
    sbArrowH: "h-full w-[18px] bg-[#8d8a8d]",
    sbTrackV: "bg-linear-to-r from-[#888] from-15% via-[#aaa] via-50% to-[#555]",
    sbTrackH: "bg-linear-to-b from-[#888] from-15% via-[#aaa] via-50% to-[#555]",
    sbThumbV: "w-[11px] rounded-[2px] border-2 border-black bg-linear-to-r from-[#222] to-[#666]",
    sbThumbH: "h-[13px] rounded-[2px] border-2 border-black bg-linear-to-b from-[#666] to-[#111]",
    sbGlyph: "ball",
    grip: "",
    main: [0, 160],
    mainH: 272,
    lens: [19, 142, 80, 65],
  },
  {
    ...grayLook,
    id: "pink",
    text: "text-[#cf479f]",
    headText: "text-[#cf479f]",
    legend: "text-[#cf479f]",
    copyText: "text-[#cf479f]",
    names: dark,
    selected: 2,
    flag: "I",
    path: "F:\\坚果云同步盘\\Aardio学习\\5...\\皮肤",
    leftCol: "ml-[16px] mt-[17px]",
    list: "h-[583px] w-[334px]",
    header: "border-b border-[#222] bg-[#434444]",
    lineBox: "border-[#3c3c3c] bg-[#333]",
    leftBtns: "gap-[16px]",
    leftBtn: "h-[58px] w-[156px]",
    group: "ml-[48px] mt-[13px] h-[709px] w-[665px] rounded-[4px] border-[#1b1b1b]",
    rowA: "pt-[16px]",
    labels: "ml-[33px] w-[175px]",
    dateCol: "ml-[46px]",
    gapA: "gap-[11px]",
    rowB: "mt-[35px] ml-[23px]",
    listTwo: "ml-[35px]",
    listThree: "ml-[22px]",
    aeroRow: "mt-[59px] ml-[30px] h-[47px]",
    aeroBtn: "h-[47px] w-[118px]",
    opacityLabel: "ml-[23px]",
    slider: "ml-[55px]",
    pathRow: "mt-[37px] ml-[36px] h-[40px]",
    copyBtn: "ml-[4px] h-[40px] w-[150px]",
    notes: "mt-0 ml-[38px]",
    btn: "rounded-[1px] border border-[#515353] bg-[#414343]",
    edit: "border border-[#333] bg-white",
    rich: "border border-[#777] bg-white",
    date: "border border-[#555] bg-white",
    combo: "border-[2px] border-[#3c3c3c] bg-white",
    dropBtn: "bg-[#333] -my-px",
    drop: "square",
    check: "size-[13px] bg-[#414343]",
    radio: "size-[13px] bg-[#414343]",
    progress: "border border-[#444] p-[1px]",
    fill: "border border-[#8a2f6a] bg-linear-to-r from-[#a9357f] from-11% to-[#dd4aa8] to-11%",
    fillPct: 90,
    thumb: "border border-[#444] bg-[#353535]",
    track: "h-[6px] bg-[#3a3a3a]",
    sbW: "w-[17px]",
    sbH: "h-[17px]",
    sbArrowV: "h-[17px] w-full",
    sbArrowH: "h-full w-[17px]",
    sbTrackV: "bg-[#333]",
    sbTrackH: "bg-[#333]",
    sbThumbV: "w-[9px] bg-linear-to-r from-[#d0479c] to-[#9c3576]",
    sbThumbH: "h-[12px] bg-linear-to-b from-[#d0479c] to-[#9c3576]",
    sbGlyph: "square",
    grip: "",
    main: [0, 160],
    mainH: 273,
    lens: [19, 142, 80, 62],
  },
];

/* ---- window frames ---- */

function Orb({ kind }: { kind: "min" | "max" | "close" }) {
  return (
    <svg viewBox="0 0 18 20" className="h-[20px] w-[18px]">
      <ellipse cx="9" cy="10" rx="8.6" ry="9.4" fill={kind === "max" ? "#e08a10" : "#ffc420"} stroke="#ffe27a" />
      {kind === "min" && <path d="M5 13h8" stroke="#7a0f00" strokeWidth="2" />}
      {kind === "max" && <path d="M5 7h8v7H5ZM5 8h8M5 10.5h8" fill="none" stroke="#7a0f00" strokeWidth="1.5" />}
      {kind === "close" && <path d="M5.5 6.5l7 7M12.5 6.5l-7 7" stroke="#5a0f00" strokeWidth="2.6" />}
    </svg>
  );
}

function ChinaWindow() {
  return (
    <div className="flex h-[777px] w-[1089px] flex-col rounded-t-[5px] border border-[#7e0b0f] bg-[#b03038]">
      <div className="flex h-[27px] items-center bg-linear-to-b from-[#d31319] via-[#b50a0c] to-[#8e0306] pl-[6px]">
        <AppIcon />
        <Title className="ml-[4px] text-white" />
        <svg viewBox="0 0 70 26" className="ml-auto h-[26px] w-[70px]">
          <path
            d="M2 4c14-3 18 4 30 0s12-2 20 2M36 16c2-10 18-10 20-2s-12 10-13 3 8-5 7-1M20 8c8 4 12 0 16 4M58 20c4 3 8 1 11-3"
            fill="none"
            stroke="#7d0307"
            strokeWidth="2.4"
          />
        </svg>
        <div className="mr-[4px] flex gap-[6px]">
          <Orb kind="min" />
          <Orb kind="max" />
          <Orb kind="close" />
        </div>
      </div>
      <div className="mx-[2px] mb-[3px] flex flex-1 bg-[#ececec]">
        <Body skin={skins[0]} />
      </div>
    </div>
  );
}

function WhiteWindow() {
  return (
    <div className="relative ml-[4px] h-[768px] w-[1082px]">
      <div className="absolute left-0 top-0 h-[768px] w-[1053px] rounded-t-[12px] border-2 border-b-0 border-[#2a1a10] bg-linear-to-b from-[#ffb400] to-[#f0651e] to-25%" />
      <div className="relative ml-[6px] flex h-[768px] flex-col pt-[9px]">
        <div className="flex h-[31px] items-center rounded-tl-[14px] border-t border-[#222] bg-linear-to-b from-white to-[#f4f4f4] pl-[6px]">
          <AppIcon className="border-r border-[#888]" />
          <Title className="ml-[4px] text-black" />
        </div>
        <div className="flex flex-1 bg-white pl-[4px]">
          <div className="flex flex-1 rounded-[7px] rounded-r-none bg-white shadow-[inset_1px_2px_1px_#555,inset_4px_6px_4px_#ddd,inset_0_-2px_1px_#777]">
            <Body skin={skins[1]} />
          </div>
        </div>
      </div>
      <svg viewBox="0 0 1082 40" className="absolute left-0 top-0 h-[40px] w-[1082px]">
        <path d="M18 9 22 13H984L997 25.500H1080" fill="none" stroke="#ee6a2b" strokeWidth="2.4" />
        <circle cx="1033" cy="25.500" r="7.500" fill="url(#orangeDot)" />
        <circle cx="1052" cy="25.500" r="7.500" fill="#9a9a9a" />
        <circle cx="1073" cy="25.500" r="9.500" fill="url(#orangeDot)" />
        <defs>
          <linearGradient id="orangeDot" x1="0" y1="0" x2="0" y2="1">
            <stop offset="0" stopColor="#ffb400" />
            <stop offset="0.6" stopColor="#ff6a2b" />
          </linearGradient>
        </defs>
      </svg>
    </div>
  );
}

function BlueWindow() {
  const cell = "flex h-[13px] items-center justify-center border border-[#174f8c] bg-linear-to-b from-[#5c9fd8] to-[#1f62a8]";
  return (
    <div className="mt-[4px] flex h-[776px] w-[1089px] flex-col rounded-t-[3px] border border-[#15498a] bg-[#3a86cc]">
      <div className="flex h-[20px] items-center bg-linear-to-b from-[#3d8fd2] to-[#2d7cc2] pl-[8px]">
        <AppIcon />
        <Title className="ml-[4px] text-white" />
        <div className="ml-auto mr-[3px] flex rounded-b-[3px] border border-t-0 border-[#9cc6ea] p-px">
          <div className={"w-[30px] " + cell}><i className="mt-[6px] h-[2px] w-[6px] bg-white" /></div>
          <div className={"w-[31px] " + cell}><i className="h-[9px] w-[8px] border-2 border-[#7fb2e2]" /></div>
          <div className={"w-[31px] " + cell}>
            <svg viewBox="0 0 9 9" className="size-[9px]"><path d="M1 1l7 7M8 1 1 8" stroke="#fff" strokeWidth="2.2" /></svg>
          </div>
        </div>
      </div>
      <div className="mx-[3px] mb-[3px] flex flex-1 bg-[#efefef]">
        <Body skin={skins[2]} />
      </div>
    </div>
  );
}

function RedBlueWindow() {
  return (
    <div className="ml-[4px] mt-[2px] flex h-[778px] w-[1090px] flex-col rounded-t-[4px] bg-linear-to-br from-[#4a3a46] from-5% via-[#1f5488] via-50% to-[#4f97d3]">
      <div className="flex h-[28px] items-center rounded-t-[4px] bg-[linear-gradient(105deg,#33202e_0%,#532a43_9%,#6d3a58_15%,#3b2742_27%,#1d2b49_40%,#10273f_55%,#143a62_66%,#2c7fc0_76%,#164472_86%,#12314f_100%)] pl-[10px]">
        <AppIcon />
        <Title className="ml-[4px] text-white" />
        <div className="mb-auto ml-auto mr-[5px] flex h-[15px] gap-px rounded-b-[4px] text-white">
          <div className="flex w-[27px] items-center justify-center rounded-bl-[4px] border border-[#8fa8c4] bg-[#1f5a8c]"><i className="mt-[4px] h-[3px] w-[11px] bg-white" /></div>
          <div className="flex w-[27px] items-center justify-center border border-[#6f8fb4] bg-[#1f5a8c]"><i className="h-[8px] w-[10px] border-2 border-[#6f9fcc]" /></div>
          <div className="flex w-[42px] items-center justify-center rounded-br-[4px] border border-[#e09a90] bg-linear-to-b from-[#e08070] to-[#b01c10]">
            <svg viewBox="0 0 9 9" className="size-[9px]"><path d="M1 1l7 7M8 1 1 8" stroke="#fff" strokeWidth="2.2" /></svg>
          </div>
        </div>
      </div>
      <div className="mx-[5px] mb-[5px] flex flex-1 bg-[#fbfdff]">
        <Body skin={skins[3]} />
      </div>
    </div>
  );
}

function ThunderWindow() {
  return (
    <div className="mt-[9px] flex h-[778px] w-[1089px] flex-col rounded-t-[3px] border border-[#06356a] bg-[#0b5394]">
      <div className="flex h-[19px] items-center bg-linear-to-b from-[#1a6fb0] via-[#064a86] via-50% to-[#04407a] pl-[4px]">
        <AppIcon />
        <Title className="ml-[3px] text-white" />
        <svg viewBox="0 0 56 12" className="ml-auto mr-[10px] h-[12px] w-[56px]">
          <path d="M0 7h9" stroke="#fff" strokeWidth="2" />
          <rect x="22" y="2" width="9" height="8" fill="none" stroke="#fff" strokeWidth="1.500" />
          <path d="M45 1.500l9 9M54 1.500l-9 9" stroke="#fff" strokeWidth="2" />
        </svg>
      </div>
      <div className="mx-[2px] mb-[2px] flex flex-1 bg-[#dceeff]">
        <Body skin={skins[4]} />
      </div>
    </div>
  );
}

function MetalWindow() {
  const cell = "flex h-[22px] w-[23px] items-center justify-center bg-linear-to-b from-[#f8f8f8] to-[#cdd2d2]";
  return (
    <div className="relative ml-[4px] mt-[9px] flex h-[778px] w-[1090px] flex-col rounded-[6px] bg-[#0a0a0a]">
      <div className="flex h-[23px] items-center rounded-t-[5px] bg-linear-to-b from-[#e8e8e8] via-white via-30% to-[#c9cccc] pl-[10px]">
        <AppIcon className="border-r border-[#888]" />
        <Title className="ml-[4px] text-black" />
        <div className="ml-auto flex gap-[4px] border-l-[4px] border-black bg-black pr-[6px]">
          <div className={cell}><i className="h-[2px] w-[11px] bg-[#666]" /></div>
          <div className={cell}>
            <svg viewBox="0 0 14 14" className="size-[14px]"><circle cx="7" cy="7" r="6" fill="none" stroke="#666" strokeDasharray="3 1" /><circle cx="7" cy="7" r="2.500" fill="none" stroke="#666" strokeWidth="1.500" /></svg>
          </div>
          <div className={cell}>
            <svg viewBox="0 0 12 12" className="size-[12px]"><path d="M1 1l10 10M11 1 1 11" stroke="#555" strokeWidth="2" /></svg>
          </div>
        </div>
      </div>
      <div className="ml-[10px] mr-[10px] flex h-[6px] items-center"><i className="h-[4px] w-[308px] bg-[#6e6e6e]" /></div>
      <div className="mb-[2px] ml-[10px] mr-[10px] flex flex-1 bg-[#efefef] shadow-[inset_0_2px_3px_#aab,inset_0_-8px_4px_#d3d9d9]">
        <Body skin={skins[5]} />
      </div>
      <svg viewBox="0 0 20 112" className="absolute right-0 top-[30px] h-[112px] w-[20px]">
        <path d="M20 0H11V6L1 17V95L11 112V108L20 96Z" fill="#050505" />
        <path d="M20 36 12 48V72L20 88Z" fill="#f4f4f4" />
        <rect x="1" y="46" width="5" height="26" fill="#00a0ff" />
      </svg>
      <svg viewBox="0 0 20 112" className="absolute bottom-[10px] left-0 h-[112px] w-[20px]">
        <path d="M0 112H9V105L19 94V15L9 0V4L0 14Z" fill="#050505" />
        <path d="M0 28 9 42V70L0 82Z" fill="#f4f4f4" />
        <rect x="14" y="42" width="5" height="26" fill="#00a0ff" />
      </svg>
    </div>
  );
}

function BlackWindow() {
  const cell = "flex h-[16px] w-[16px] items-center justify-center border border-[#333] bg-[#777] shadow-[inset_0_0_0_1px_#aaa]";
  return (
    <div className="mt-[6px] flex h-[777px] w-[1089px] flex-col rounded-t-[4px] border border-[#444] bg-[#6b696b]">
      <div className="flex h-[26px] items-center bg-linear-to-b from-[#555] via-[#aaa] via-60% to-[#888] pl-[8px]">
        <AppIcon />
        <div className="ml-[8px] flex h-[22px] w-[971px] items-center rounded-[2px] border border-[#444] bg-linear-to-b from-[#9a9a9a] via-[#555] via-55% to-black to-57% shadow-[inset_0_-6px_4px_#777]">
          <Title className="ml-[5px] text-[#c8c8c8]" />
        </div>
        <div className="ml-auto mr-[7px] flex gap-[4px]">
          <div className={cell}><i className="h-[2px] w-[6px] bg-[#222]" /></div>
          <div className="h-[16px] w-[16px] border border-[#333] bg-black" />
          <div className={cell}>
            <svg viewBox="0 0 8 8" className="size-[8px]"><path d="M1 1l6 6M7 1 1 7" stroke="#222" strokeWidth="1.500" /></svg>
          </div>
        </div>
      </div>
      <div className="mx-[3px] mb-[3px] flex flex-1 bg-[#8d8a8d]">
        <Body skin={skins[6]} />
      </div>
    </div>
  );
}

function PinkWindow() {
  return (
    <div className="ml-[6px] mt-[8px] flex h-[775px] w-[1090px] flex-col rounded-t-[4px] bg-[#393939]">
      <div className="flex h-[24px] items-center pl-[10px]">
        <AppIcon />
        <Title className="ml-[4px] text-[#dd4aa8]" />
        <svg viewBox="0 0 64 14" className="ml-auto mr-[8px] h-[14px] w-[64px]">
          <path d="M0 7h3v3H0zM5 7h3v3H5zM10 7h3v3h-3zM48 0h4v3h-4zM58 0h4v3h-4zM53 5h4v3h-4zM48 11h4v3h-4zM58 11h4v3h-4z" fill="#dd4aa8" />
          <path d="M24 1h3v3h-3zM24 6h3v3h-3zM24 11h3v3h-3zM29 11h3v3h-3zM34 11h3v3h-3z" fill="#5c3050" />
        </svg>
      </div>
      <div className="mx-[4px] mb-[4px] flex flex-1 border-t border-[#4a4a4a] bg-[#282828]">
        <Body skin={skins[7]} />
      </div>
    </div>
  );
}

function Watermark() {
  return (
    <div className="absolute bottom-0 right-0 flex h-[85px] w-[217px] items-start bg-white pl-[6px] pt-[6px]">
      <div className="flex h-[70px] w-[84px] shrink-0 items-center justify-center rounded-[4px] border-2 border-[#f01818] p-[3px]">
        <div className="flex h-full w-full items-center justify-center bg-[#ff1a1a]">
          <span className="scale-x-[1.2] text-[60px] font-black leading-[60px] text-[#282828]">非</span>
        </div>
      </div>
      <div className="ml-[4px] flex flex-col">
        <span className="-skew-x-6 pl-[5px] text-[44px] font-bold leading-[46px] tracking-[7px] text-[#282828]">业余</span>
        <div className="flex items-end">
          <span className="w-[101px] rounded-[4px] bg-[#444] text-center font-['Open_Sans','Noto_Sans',sans-serif] text-[16px] font-normal leading-[19px] tracking-[-0.2px] text-white">
            FeiYeYu.com
          </span>
          <i className="mb-[3px] ml-[2px] h-[9px] w-[11px] bg-[#f00]" />
        </div>
      </div>
    </div>
  );
}

export default function App() {
  return (
    <div className="relative grid h-[3208px] w-[2208px] grid-cols-[1100px_1108px] grid-rows-[800px_800px_800px_808px] overflow-hidden bg-white font-['Noto_Sans_CJK_SC',sans-serif] text-[18px] font-light leading-[18px]">
      <div><ChinaWindow /></div>
      <div><WhiteWindow /></div>
      <div><BlueWindow /></div>
      <div><RedBlueWindow /></div>
      <div><ThunderWindow /></div>
      <div><MetalWindow /></div>
      <div><BlackWindow /></div>
      <div><PinkWindow /></div>
      <Watermark />
    </div>
  );
}
